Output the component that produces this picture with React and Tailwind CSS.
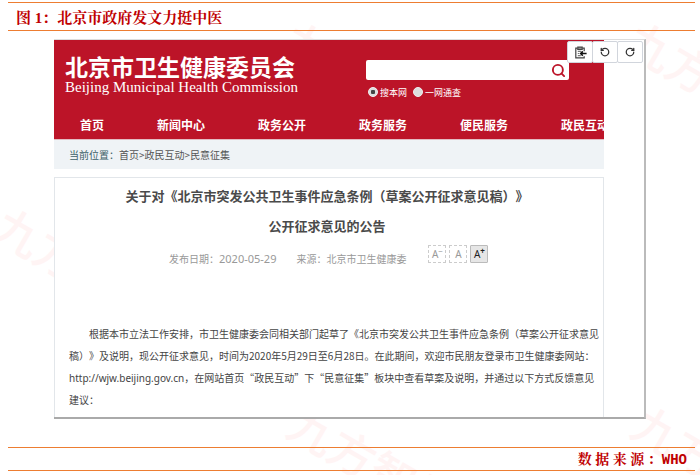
import React from 'react';
import { Search, RotateCcw, RotateCw } from 'lucide-react';

const navItems = ['首页', '新闻中心', '政务公开', '政务服务', '便民服务', '政民互动'];

const watermarks = [
  { left: 0, top: 196 },
  { left: 294, top: 394 },
  { left: 638, top: 394 },
  { left: 289, top: 10 },
  { left: 632, top: 10 },
];

const PasteIcon = () => (
  <svg width="13" height="13" viewBox="0 0 13 13" fill="none" stroke="#444" strokeWidth="1.2">
    <path d="M3.5 2.2H1.8v9.6h8.4v-1.6M8.5 2.2h1.7v3" />
    <path d="M3.8 1.2h4.4v2.2H3.8z" fill="#aaa" />
    <path d="M3.8 5.4h3.4M3.8 7.5h1.4M3.8 9.6h3" stroke="#777" />
    <path d="M12.6 7.6H6.8M8.8 5.4 6.6 7.6l2.2 2.2" stroke="#111" strokeWidth="1.5" />
  </svg>
);

const ToolButton = ({ label, children }) => (
  <button
    type="button"
    aria-label={label}
    className="-ml-px flex h-[22px] w-[26px] items-center justify-center rounded-[2px] border border-gray-300 bg-white text-[#333]"
  >
    {children}
  </button>
);

const Watermark = () => (
  <div aria-hidden="true" className="pointer-events-none absolute inset-0 overflow-hidden">
    {watermarks.map((mark, i) => (
      <span
        key={i}
        style={{ left: mark.left, top: mark.top }}
        className="absolute origin-left rotate-30 text-[46px] leading-none font-medium whitespace-nowrap text-[#fff4f4]"
      >
        九方智投
      </span>
    ))}
  </div>
);

const ScopeRadio = ({ label, ...props }) => (
  <label className="flex items-start gap-[2px]">
    <input
      type="radio"
      name="scope"
      className="mt-[3px] size-[10px] appearance-none rounded-full border border-[#eee] bg-[#ddd] checked:bg-[radial-gradient(#444_35%,#ddd_45%)]"
      {...props}
    />
    <span className="pt-px">{label}</span>
  </label>
);

const SiteHeader = () => (
  <header className="h-[100px] overflow-hidden border-b border-[#e3bcc2] bg-[#bc1428] text-white">
    <div className="flex h-[71px] justify-between pr-[35px] pl-[11px]">
      <div className="pt-[13px]">
        <h1 className="text-[23px] leading-[26px] font-bold whitespace-nowrap">北京市卫生健康委员会</h1>
        <p className="font-['Liberation_Serif',serif] text-[15px] leading-4 whitespace-nowrap">
          Beijing Municipal Health Commission
        </p>
      </div>
      <form className="pt-5">
        <div className="flex h-5 w-[203px] items-center rounded-[2px] bg-white pr-[3px]">
          <input type="text" aria-label="搜索" className="h-5 min-w-0 flex-1 px-2 text-[10px] text-black outline-none" />
          <button type="button" aria-label="搜索" className="text-[#bc1428]">
            <Search size={15} strokeWidth={3} />
          </button>
        </div>
        <div className="flex gap-[6px] pt-1 pl-[2px] text-[9px] leading-4">
          <ScopeRadio label="搜本网" defaultChecked />
          <ScopeRadio label="一网通查" />
        </div>
      </form>
    </div>
    <nav className="flex gap-[53px] pl-[26px] text-[12px] leading-7 font-bold whitespace-nowrap">
      {navItems.map((item) => (
        <a key={item} href="#">{item}</a>
      ))}
    </nav>
  </header>
);

const FontSizeButtons = () => (
  <div className="flex gap-[3px] font-['Noto_Sans',sans-serif] text-[10px] text-[#999]">
    <button type="button" className="flex size-[18px] items-center justify-center border border-dashed border-[#ccc]">
      A<span className="self-start text-[8px] leading-[10px]">−</span>
    </button>
    <button type="button" className="flex size-[18px] items-center justify-center border border-dashed border-[#ccc]">
      A
    </button>
    <button
      type="button"
      className="flex size-[18px] items-center justify-center rounded-[1px] border border-[#bbb] bg-[#e6e6e6] text-[#222]"
    >
      A<span className="self-start text-[8px] leading-[10px] font-bold">+</span>
    </button>
  </div>
);

const Notice = () => (
  <article className="mt-2 h-[242px] overflow-hidden border border-b-0 border-[#e2e6ea]">
    <h2 className="pt-[3px] pr-1 text-center text-[13px] leading-[30px] font-bold text-[#4a4a4a]">
      关于对《北京市突发公共卫生事件应急条例（草案公开征求意见稿）》
      <br />
      公开征求意见的公告
    </h2>
    <div className="flex h-8 items-start pt-1 pl-[114px] text-[10px] leading-7 whitespace-nowrap text-[#999]">
      <span>
        发布日期：<time className="font-['Noto_Sans',sans-serif] text-[11px]">2020-05-29</time>
      </span>
      <span className="pr-[22px] pl-5">来源：北京市卫生健康委</span>
      <FontSizeButtons />
    </div>
    <p className="pt-[50px] pl-[14px] indent-5 text-[10px] leading-[22px] whitespace-nowrap text-[#444]">
      根据本市立法工作安排，市卫生健康委会同相关部门起草了《北京市突发公共卫生事件应急条例（草案公开征求意见
      <br />
      稿）》及说明，现公开征求意见，时间为2020年5月29日至6月28日。在此期间，欢迎市民朋友登录市卫生健康委网站：
      <br />
      <a href="#" className="font-['Noto_Sans',sans-serif]">http://wjw.beijing.gov.cn</a>
      ，在网站首页“政民互动”下“民意征集”板块中查看草案及说明，并通过以下方式反馈意见
      <br />
      建议：
    </p>
  </article>
);

export default function App() {
  return (
    <div
      lang="zh-CN"
      className="relative min-h-screen overflow-hidden bg-white pt-[2px] pr-[5px] pl-2 font-['Noto_Sans_CJK_SC',sans-serif] [text-spacing-trim:space-all]"
    >
      <Watermark />
      <div className="relative">
        <div className="border-y border-[#ed7d31] pt-[3px] pl-2 font-['Liberation_Serif','Noto_Serif_CJK_SC','Noto_Sans_CJK_SC',serif] text-[15px] leading-6 font-bold text-[#c00000]">
          图 1：北京市政府发文力挺中医
        </div>

        <div className="relative mt-2 mr-[49px] ml-[46px] h-[380px] overflow-hidden border-t border-r-2 border-b-2 border-t-[#ddd] border-r-[#bbb] border-b-[#aaa] bg-white pr-10">
          <SiteHeader />
          <div className="h-[29px] bg-[#eff3f6] pl-[15px] text-[10px] leading-[29px] text-[#555]">
            <span className="text-[#3d6068]">当前位置：</span>
            <a href="#">首页</a>&gt;<a href="#">政民互动</a>&gt;<a href="#">民意征集</a>
          </div>
          <Notice />
          <div className="absolute top-px right-px flex">
            <ToolButton label="粘贴"><PasteIcon /></ToolButton>
            <ToolButton label="撤销"><RotateCcw size={10} strokeWidth={3} /></ToolButton>
            <ToolButton label="重做"><RotateCw size={10} strokeWidth={3} /></ToolButton>
          </div>
        </div>

        <div className="mt-7 border-y border-[#ed7d31] pt-[2px] pr-2 text-right font-['Liberation_Serif','Noto_Serif_CJK_SC','Noto_Sans_CJK_SC',serif] text-[14px] leading-5 font-bold text-[#c00000]">
          数 据 来 源 ：<span className="font-['Liberation_Mono',monospace]">WHO</span>
        </div>
      </div>
    </div>
  );
}
